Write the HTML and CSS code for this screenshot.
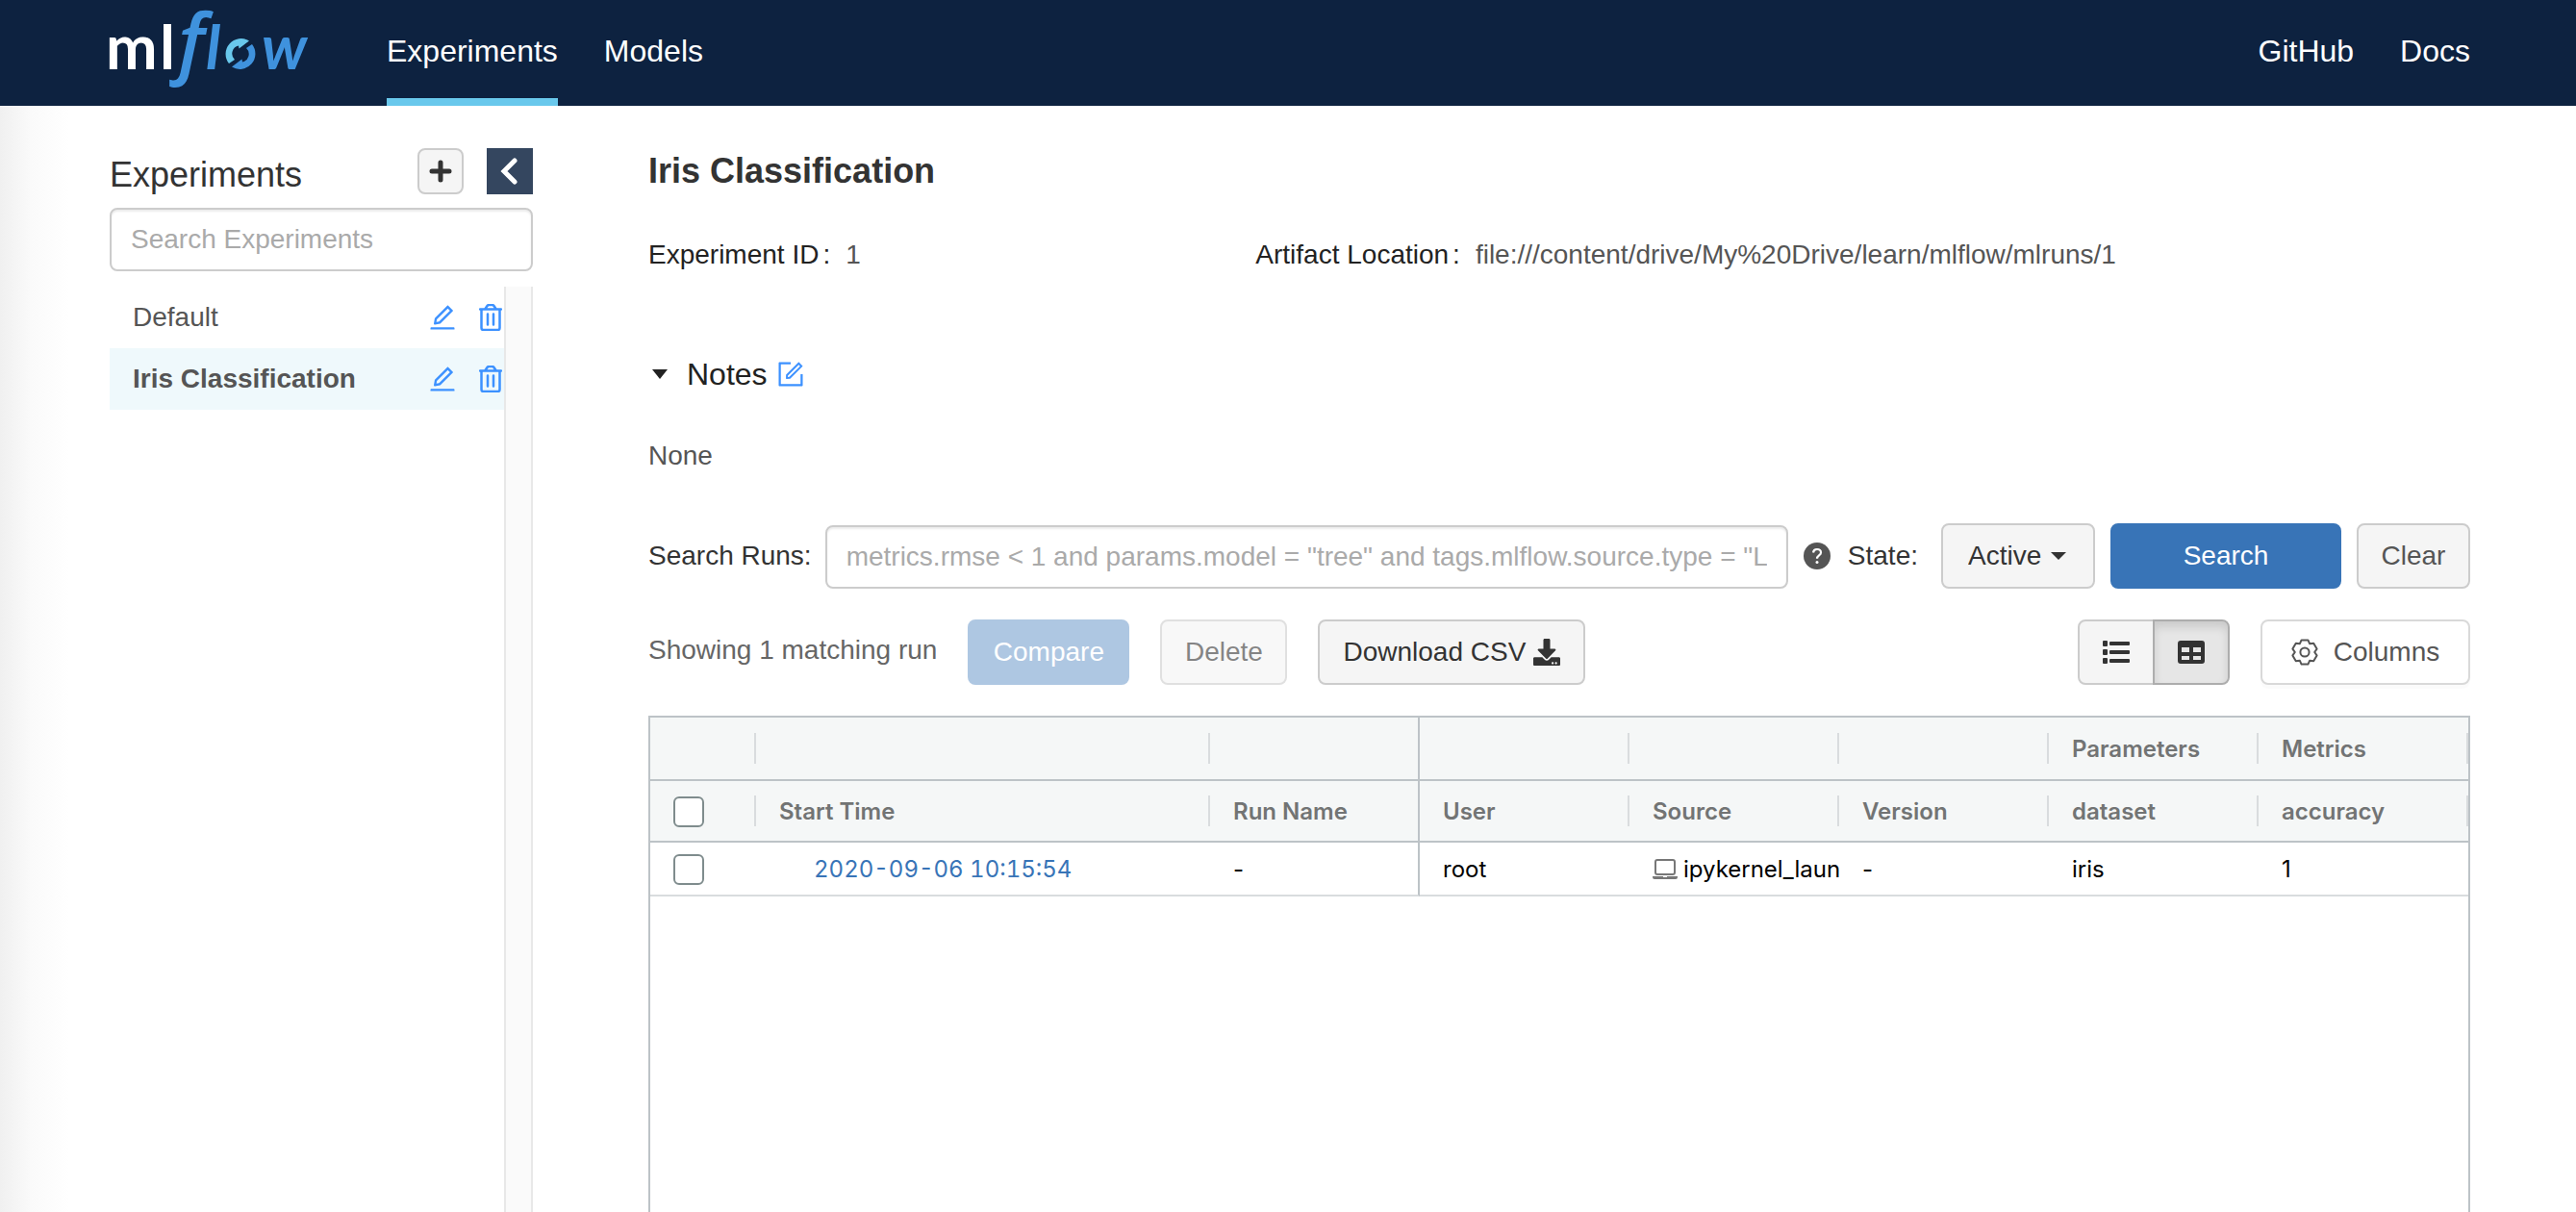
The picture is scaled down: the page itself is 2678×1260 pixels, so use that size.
FILE: index.html
```html
<!DOCTYPE html>
<html lang="en">
<head>
<meta charset="utf-8">
<title>MLflow</title>
<link rel="stylesheet" href="styles.css">
</head>
<body>
<svg class="sprite" aria-hidden="true">
  <symbol id="edit" viewBox="64 64 896 896"><path d="M257.7 752c2 0 4-.2 6-.5L431.9 722c2-.4 3.9-1.3 5.3-2.8l423.9-423.9a9.96 9.96 0 0 0 0-14.1L694.9 114.9c-1.9-1.9-4.4-2.9-7.1-2.9s-5.2 1-7.1 2.9L256.8 538.8c-1.5 1.5-2.4 3.3-2.8 5.3l-29.5 168.2a33.5 33.5 0 0 0 9.4 29.8c6.6 6.4 14.9 9.9 23.8 9.9zm67.4-174.4L687.8 215l73.3 73.3-362.7 362.6-88.9 15.7 15.6-89zM880 836H144c-17.7 0-32 14.3-32 32v36c0 4.4 3.6 8 8 8h784c4.4 0 8-3.6 8-8v-36c0-17.7-14.3-32-32-32z"/></symbol>
  <symbol id="trash" viewBox="0 0 24 28"><path d="M1 5.5h22M2.5 5.5v19.500q0 2 2 2h15q2 0 2-2V5.500M6.500 5l2-3q.7-1 1.800-1h3.400q1.100 0 1.800 1l2 3M9 10.500v11M15 10.500v11" fill="none" stroke="currentColor" stroke-width="2.500" stroke-linecap="round" stroke-linejoin="round"/></symbol>
  <symbol id="caret" viewBox="0 0 16 10"><path d="M0 0h16L8 10z"/></symbol>
</svg>

<header class="topbar">
  <a class="logo" href="#" aria-label="mlflow">
    <svg width="230" height="110" viewBox="-6 0 230 110">
      <text class="logo-ml" x="-4" y="72">m</text>
      <text class="logo-ml" x="52" y="72">l</text>
      <text class="logo-f" x="71" y="72">f</text>
      <text class="logo-low" x="100" y="72">l</text>
      <path class="logo-arc" d="M124 66A16 16 0 0 1 145 42.500L134.500 50.500L134 47.500A8.500 8.500 0 0 0 130 62z"/>
      <path class="logo-arc-dark" transform="rotate(180 136 56)" d="M124 66A16 16 0 0 1 145 42.500L134.500 50.500L134 47.500A8.500 8.500 0 0 0 130 62z"/>
      <text class="logo-low" x="158" y="72">w</text>
    </svg>
  </a>
  <nav class="nav">
    <a class="active" href="#">Experiments</a>
    <a href="#">Models</a>
  </nav>
  <nav class="nav nav-right">
    <a href="#">GitHub</a>
    <a href="#">Docs</a>
  </nav>
</header>

<div class="page">
  <aside class="sidebar">
    <div class="side-head">
      <h2>Experiments</h2>
      <button class="add" type="button" aria-label="New experiment"><svg width="24" height="24" viewBox="0 0 24 24"><path d="M12 3v18M3 12h18" stroke="currentColor" stroke-width="5" stroke-linecap="round"/></svg></button>
      <button class="collapse" type="button" aria-label="Collapse"><svg width="20" height="28" viewBox="0 0 20 28"><path d="M15 3L4 14l11 11" fill="none" stroke="currentColor" stroke-width="5" stroke-linecap="round" stroke-linejoin="miter"/></svg></button>
    </div>
    <input class="field" type="text" placeholder="Search Experiments" aria-label="Search Experiments">
    <div class="side-list">
      <ul>
        <li><a class="exp" href="#">Default</a>
          <button class="icon-btn" type="button" aria-label="Edit"><svg width="28" height="28"><use href="#edit"/></svg></button>
          <button class="icon-btn" type="button" aria-label="Delete"><svg width="24" height="28"><use href="#trash"/></svg></button></li>
        <li class="selected"><a class="exp" href="#">Iris Classification</a>
          <button class="icon-btn" type="button" aria-label="Edit"><svg width="28" height="28"><use href="#edit"/></svg></button>
          <button class="icon-btn" type="button" aria-label="Delete"><svg width="24" height="28"><use href="#trash"/></svg></button></li>
      </ul>
      <div class="track"></div>
    </div>
  </aside>

  <main class="main">
    <h1>Iris Classification</h1>
    <dl class="meta">
      <div><dt>Experiment ID</dt><dd>1</dd></div>
      <div><dt>Artifact Location</dt><dd>file:///content/drive/My%20Drive/learn/mlflow/mlruns/1</dd></div>
    </dl>

    <div class="notes-head">
      <svg width="16" height="10"><use href="#caret"/></svg>
      <h3>Notes</h3>
      <button class="icon-btn" type="button" aria-label="Edit notes"><svg width="28" height="28" viewBox="64 64 896 896"><path d="M904 512h-56c-4.400 0-8 3.600-8 8v320H184V184h320c4.400 0 8-3.600 8-8v-56c0-4.400-3.600-8-8-8H144c-17.700 0-32 14.300-32 32v736c0 17.700 14.300 32 32 32h736c17.700 0 32-14.300 32-32V520c0-4.400-3.600-8-8-8z"/><path d="M355.900 534.900L354 653.800c-.1 8.900 7.100 16.200 16 16.200h.4l118-2.900c2-.1 4-.9 5.400-2.300l415.900-415c3.100-3.100 3.100-8.200 0-11.300L785.400 114.300c-1.600-1.600-3.600-2.300-5.700-2.300s-4.100.8-5.700 2.300l-415.800 415a8.300 8.300 0 0 0-2.300 5.600zm63.500 23.600L779.700 199l45.200 45.100-360.500 359.700-45.700 1.100.7-46.400z"/></svg></button>
    </div>
    <p class="notes">None</p>

    <form class="search">
      <label class="runs-label" for="q">Search Runs:</label>
      <input class="field" id="q" type="text" placeholder="metrics.rmse &lt; 1 and params.model = &quot;tree&quot; and tags.mlflow.source.type = &quot;L">
      <svg class="help" width="28" height="28" viewBox="0 0 28 28"><circle cx="14" cy="14" r="14"/><path d="M10 10.500C10.300 8 12 7 14 7c2.300 0 4 1.400 4 3.500 0 3-4 3-4 6.300" fill="none" stroke="#fff" stroke-width="2.200"/><circle cx="14" cy="20.500" r="1.500" fill="#fff"/></svg>
      <label class="state-label" for="state">State:</label>
      <div class="select">
        <select id="state" class="btn"><option>Active</option></select>
        <svg width="16" height="8" viewBox="0 0 16 8"><path d="M0 0h16L8 8z"/></svg>
      </div>
      <button class="btn primary search-btn" type="button">Search</button>
      <button class="btn muted clear-btn" type="button">Clear</button>
    </form>

    <div class="actions">
      <span class="count">Showing 1 matching run</span>
      <button class="btn primary compare-btn" type="button" disabled>Compare</button>
      <button class="btn delete-btn" type="button" disabled>Delete</button>
      <button class="btn download-btn" type="button">Download CSV <svg width="28" height="28" viewBox="0 0 512 512"><path d="M216 0h80c13.300 0 24 10.700 24 24v168h87.700c17.800 0 26.700 21.500 14.100 34.100L269.700 378.300c-7.500 7.500-19.800 7.500-27.300 0L90.100 226.100c-12.600-12.600-3.700-34.100 14.100-34.100H192V24c0-13.300 10.700-24 24-24zm296 376v112c0 13.300-10.700 24-24 24H24c-13.300 0-24-10.700-24-24V376c0-13.300 10.700-24 24-24h146.700l49 49c20.100 20.100 52.500 20.100 72.600 0l49-49H488c13.300 0 24 10.700 24 24zm-124 88c0-11-9-20-20-20s-20 9-20 20 9 20 20 20 20-9 20-20zm64 0c0-11-9-20-20-20s-20 9-20 20 9 20 20 20 20-9 20-20z"/></svg></button>
      <div class="toggle">
        <button class="btn" type="button" aria-label="List view"><svg width="28" height="24" viewBox="0 0 28 24"><rect width="5" height="6" rx="1"/><rect y="9" width="5" height="6" rx="1"/><rect y="18" width="5" height="6" rx="1"/><rect x="7" y="1" width="21" height="4" rx="1"/><rect x="7" y="10" width="21" height="4" rx="1"/><rect x="7" y="19" width="21" height="4" rx="1"/></svg></button>
        <button class="btn pressed" type="button" aria-label="Table view" aria-pressed="true"><svg width="28" height="24" viewBox="0 0 28 24"><path fill-rule="evenodd" d="M3 0h22q3 0 3 3v18q0 3-3 3H3q-3 0-3-3V3q0-3 3-3zM4 7v5h8V7zM16 7v5h8V7zM4 16v4h8v-4zM16 16v4h8v-4z"/></svg></button>
      </div>
      <button class="btn columns-btn" type="button"><svg class="line-icon" width="28" height="28" viewBox="0 0 28 28"><path d="M10.600 1.400h6.800l1.700 3.800 4.100-.4 3.400 5.800-2.400 3.400 2.400 3.400-3.400 5.800-4.100-.4-1.700 3.800h-6.800l-1.700-3.800-4.100.4-3.400-5.800 2.400-3.400-2.400-3.400 3.400-5.800 4.100.4z"/><circle cx="14" cy="14" r="4.600"/></svg>Columns</button>
    </div>

    <div class="grid">
      <table>
        <colgroup><col class="c-check"><col class="c-time"><col class="c-std"><col class="c-std"><col class="c-std"><col class="c-std"><col class="c-std"><col></colgroup>
        <thead>
          <tr class="groups"><th></th><th></th><th></th><th></th><th></th><th></th><th>Parameters</th><th>Metrics</th></tr>
          <tr><th><input type="checkbox" aria-label="Select all runs"></th><th>Start Time</th><th>Run Name</th><th>User</th><th>Source</th><th>Version</th><th>dataset</th><th>accuracy</th></tr>
        </thead>
        <tbody>
          <tr>
            <td><input type="checkbox" aria-label="Select run"></td>
            <td class="time"><a href="#">2020-09-06 10:15:54</a></td>
            <td>-</td>
            <td>root</td>
            <td><div class="source"><svg width="26" height="22" viewBox="0 0 26 22"><rect x="3" y="1" width="20" height="15" rx="2" fill="none" stroke="currentColor" stroke-width="2"/><path d="M0 18h11v1h4v-1h11v1q0 2-2 2H2q-2 0-2-2z" fill="currentColor"/></svg><span>ipykernel_laun</span></div></td>
            <td>-</td>
            <td>iris</td>
            <td>1</td>
          </tr>
        </tbody>
      </table>
    </div>
  </main>
</div>
</body>
</html>
```
FILE: styles.css
```css
* { box-sizing: border-box; }

body {
  margin: 0;
  min-height: 100vh;
  display: flex;
  flex-direction: column;
  font: 28px/40px "Liberation Sans", Arial, sans-serif;
  color: #333;
  background: linear-gradient(to right, #f0f0f0, #fafafa 32px, #fff 72px);
}

h1, h2, h3, p, dl, dd, ul { margin: 0; padding: 0; }
ul { list-style: none; }
a { text-decoration: none; color: inherit; }
button, input, select { font: inherit; color: inherit; margin: 0; }
button, select { cursor: pointer; }
svg { display: block; fill: currentColor; flex: none; }
.line-icon { fill: none; stroke: currentColor; stroke-width: 2; stroke-linejoin: round; }
.sprite { position: absolute; width: 0; height: 0; }

/* Top bar */
.topbar {
  height: 110px;
  padding: 0 110px 0 108px;
  display: flex;
  background: #0d2240;
  color: #fff;
}
.logo { width: 294px; }
.logo-ml { font: bold 64px Lato, sans-serif; fill: #fff; }
.logo-f { font: italic 600 80px "Open Sans", sans-serif; fill: #3f92dd; }
.logo-low { font: italic bold 64px Lato, sans-serif; fill: #3f92dd; }
.logo-arc { fill: #69c8ec; }
.logo-arc-dark { fill: #3f92dd; }
.nav { display: flex; gap: 48px; font-size: 32px; line-height: 98px; }
.nav a { padding-top: 4px; border-bottom: 8px solid transparent; }
.nav a.active { border-color: #69c8ec; }
.nav-right { margin-left: auto; }

.page { flex: 1; display: flex; padding: 0 110px 0 114px; }

/* Sidebar */
.sidebar {
  width: 440px;
  margin-right: 120px;
  padding-top: 44px;
  display: flex;
  flex-direction: column;
}
.side-head { display: flex; gap: 24px; margin-bottom: 14px; }
.side-head h2 { flex: 1; font-size: 36px; font-weight: 400; line-height: 56px; height: 48px; }
.side-head button {
  width: 48px;
  height: 48px;
  padding: 0;
  display: grid;
  place-items: center;
}
.add { background: #f5f5f5; border: 2px solid #ccc; border-radius: 8px; }
.collapse { background: #34465f; border: 0; color: #fff; }
.field {
  width: 100%;
  height: 66px;
  padding: 0 20px;
  border: 2px solid #ccc;
  border-radius: 8px;
  background: #fff;
  box-shadow: inset 0 2px 2px rgba(0, 0, 0, .08);
}
.field::placeholder { color: #aaa; opacity: 1; }
.side-list { flex: 1; display: flex; margin-top: 16px; }
.side-list ul { flex: 1; }
.side-list li {
  display: flex;
  align-items: center;
  height: 64px;
  padding: 0 2px 0 24px;
  gap: 24px;
  color: #555;
}
.side-list li.selected { background: #eff9fc; font-weight: 700; }
.exp { flex: 1; }
.icon-btn { padding: 0; border: 0; background: none; color: #3c91ff; }
.track { width: 30px; background: #fafafa; border: solid #e8e8e8; border-width: 0 2px; }

/* Main column */
.main { flex: 1; min-width: 0; padding-top: 44px; display: flex; flex-direction: column; }
h1 { font-size: 36px; line-height: 48px; }
.meta { display: grid; grid-template-columns: 1fr 2fr; margin-top: 43px; }
.meta div { display: flex; }
.meta dt { color: #222; }
.meta dt::after { content: ":"; margin: 0 16px 0 4px; }
.meta dd { color: #555; }
.notes-head { display: flex; align-items: center; margin-top: 82px; padding-left: 4px; color: #222; }
.notes-head h3 { font-size: 32px; font-weight: 400; margin: 0 10px 0 20px; line-height: 44px; }
.notes { margin-top: 43px; color: #555; }

.search { display: flex; align-items: center; height: 68px; margin-top: 50px; }
.runs-label { margin-right: 14px; }
.search .field { flex: 1; width: auto; min-width: 0; margin-top: 2px; }
.help { margin: 0 18px 0 16px; color: #555; }
.state-label { margin-right: 24px; }
.btn {
  height: 68px;
  padding: 0;
  border: 2px solid #ccc;
  border-radius: 8px;
  background: #f5f5f5;
  display: flex;
  align-items: center;
  justify-content: center;
}
.btn.primary { background: #3874b7; border-color: #3874b7; color: #fff; }
.btn.muted { color: #555; }
.btn:disabled { opacity: .6; cursor: default; }
.btn.primary:disabled { opacity: .4; }
.select { display: grid; width: 160px; align-items: center; }
.select > * { grid-area: 1 / 1; }
.select .btn { appearance: none; width: 100%; padding-left: 26px; }
.select svg { justify-self: end; margin-right: 30px; pointer-events: none; }
.search-btn { width: 240px; margin: 0 16px; }
.clear-btn { width: 118px; }

.actions { display: flex; align-items: center; margin-top: 32px; }
.count { color: #666; margin-right: 32px; padding-bottom: 4px; }
.compare-btn { width: 168px; }
.delete-btn { width: 132px; margin: 0 32px; color: #333; }
.download-btn { width: 278px; gap: 8px; }
.toggle { display: flex; margin: 0 32px 0 auto; }
.toggle .btn { width: 80px; border-radius: 8px 0 0 8px; }
.toggle .pressed {
  margin-left: -2px;
  border-radius: 0 8px 8px 0;
  background: #e6e6e6;
  border-color: #adadad;
  box-shadow: inset 0 6px 10px rgba(0, 0, 0, .12);
}
.columns-btn {
  width: 218px;
  gap: 16px;
  background: #fff;
  border-color: #d9d9d9;
  color: #555;
  box-shadow: 0 4px 0 rgba(0, 0, 0, .015);
}

/* Runs table */
.grid {
  flex: 1;
  margin-top: 32px;
  border: 2px solid #bdc3c7;
  border-bottom: 0;
  background: #fff;
  font: 24px/32px Inter, sans-serif;
  color: #000;
}
table { width: 100%; table-layout: fixed; border-collapse: separate; border-spacing: 0; }
.c-check { width: 110px; }
.c-time { width: 472px; }
.c-std { width: 218px; }
th, td { padding: 2px 0 0 24px; text-align: left; overflow: hidden; white-space: nowrap; }
th {
  height: 64px;
  font-weight: 600;
  color: #727474;
  border-bottom: 2px solid #bdc3c7;
  background: linear-gradient(#d9dcde, #d9dcde) right center / 2px 32px no-repeat #f5f7f7;
}
.groups th { height: 66px; }
th:nth-child(3) { background: #f5f7f7; }
th:nth-child(3), td:nth-child(3) { border-right: 2px solid #bdc3c7; }
td { height: 56px; border-bottom: 2px solid #d9dcde; }
td.time { padding-left: 60px; font-variant-numeric: tabular-nums; }
td a { color: #3874b7; }
.source { display: flex; align-items: center; gap: 6px; overflow: hidden; }
.source svg { color: #777; }
.grid input {
  appearance: none;
  display: block;
  width: 32px;
  height: 32px;
  border: 2px solid #7f8c8d;
  border-radius: 6px;
  background: #fff;
}
```
